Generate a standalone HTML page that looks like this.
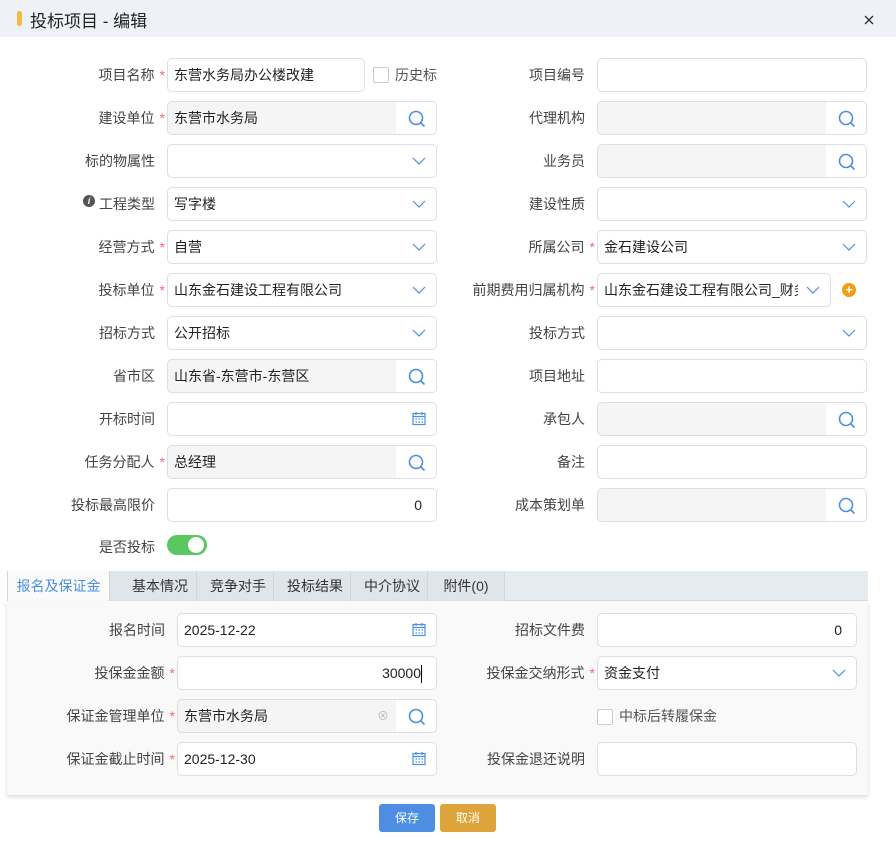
<!DOCTYPE html>
<html><head><meta charset="utf-8"><style>
*{box-sizing:border-box;margin:0;padding:0}
body{width:896px;height:851px;background:#fff;font-family:"Liberation Sans","Noto Sans CJK SC",sans-serif;font-size:14px;color:#333;position:relative;overflow:hidden}
.hd{position:absolute;left:0;top:0;width:896px;height:37px;background:#eef2f7}
.hd .bar{position:absolute;left:17px;top:11px;width:5px;height:15px;border-radius:3px;background:#f5b945}
.hd .t{position:absolute;left:30px;top:7px;font-size:17px;color:#222}
.l{position:absolute;text-align:right;line-height:34px;height:34px;color:#444}
.s{color:#f56c6c;margin-left:5px}
.i{position:absolute;height:34px;border:1px solid #dcdfe6;border-radius:5px;background:#fff;line-height:32px;padding-left:6px;color:#222;overflow:hidden;white-space:nowrap}
.g{background:#f5f5f5}
.sb{position:absolute;right:0;top:0;width:40px;height:32px;background:#fff}
.ic{position:absolute;right:10px;top:8px}
.tabs{position:absolute;left:7px;top:571px;width:861px;height:30px;background:#e6ebf0;border-bottom:1px solid #d8dde3}
.tab{position:absolute;top:0;height:30px;line-height:30px;text-align:center;border-right:1px solid #d0d6dd;color:#333;background:#dfe5eb;padding-left:6px}
.panel{position:absolute;left:7px;top:601px;width:861px;height:194px;background:#f9f9f9;box-shadow:0 2px 4px rgba(0,0,0,.15)}
.btn{position:absolute;top:804px;width:56px;height:28px;border-radius:3px;color:#fff;font-size:12px;line-height:28px;text-align:center}
.cb{position:absolute;width:16px;height:16px;border:1px solid #ccc;border-radius:2px;background:#fff}
</style></head><body>
<div class="hd"><div class="bar"></div><div class="t">投标项目 - 编辑</div>
<svg style="position:absolute;left:864px;top:15px" width="10" height="10" viewBox="0 0 10 10"><path d="M1 1l8 8M9 1l-8 8" stroke="#333" stroke-width="1.4"/></svg></div>

<div class="l" style="left:40px;width:125px;top:58px">项目名称<span class="s">*</span></div>
<div class="i" style="left:167px;top:58px;width:198px">东营水务局办公楼改建</div>
<div class="cb" style="left:373px;top:67px"></div><div class="l" style="left:395px;top:58px;text-align:left;color:#555">历史标</div>
<div class="l" style="left:460px;width:125px;top:58px">项目编号</div>
<div class="i" style="left:597px;top:58px;width:270px"></div>

<div class="l" style="left:40px;width:125px;top:101px">建设单位<span class="s">*</span></div>
<div class="i g" style="left:167px;top:101px;width:270px">东营市水务局<div class="sb"><svg class="ic" width="18" height="18" viewBox="0 0 18 18"><circle cx="8" cy="8" r="6.5" fill="none" stroke="#4a90e2" stroke-width="1.6"/><path d="M13 13l3.5 3.5" stroke="#4a90e2" stroke-width="1.6"/></svg></div></div>
<div class="l" style="left:460px;width:125px;top:101px">代理机构</div>
<div class="i g" style="left:597px;top:101px;width:270px"><div class="sb"><svg class="ic" width="18" height="18" viewBox="0 0 18 18"><circle cx="8" cy="8" r="6.5" fill="none" stroke="#4a90e2" stroke-width="1.6"/><path d="M13 13l3.5 3.5" stroke="#4a90e2" stroke-width="1.6"/></svg></div></div>

<div class="l" style="left:40px;width:115px;top:144px">标的物属性</div>
<div class="i" style="left:167px;top:144px;width:270px"><svg class="ic" style="top:11px" width="14" height="10" viewBox="0 0 14 10"><path d="M1 2l6 6 6-6" fill="none" stroke="#4a90e2" stroke-width="1.2"/></svg></div>
<div class="l" style="left:460px;width:125px;top:144px">业务员</div>
<div class="i g" style="left:597px;top:144px;width:270px"><div class="sb"><svg class="ic" width="18" height="18" viewBox="0 0 18 18"><circle cx="8" cy="8" r="6.5" fill="none" stroke="#4a90e2" stroke-width="1.6"/><path d="M13 13l3.5 3.5" stroke="#4a90e2" stroke-width="1.6"/></svg></div></div>

<div style="position:absolute;left:83px;top:195px;width:12px;height:12px;border-radius:50%;background:#555;color:#fff;font-size:9px;font-weight:bold;font-style:italic;text-align:center;line-height:12px">i</div>
<div class="l" style="left:40px;width:115px;top:187px">工程类型</div>
<div class="i" style="left:167px;top:187px;width:270px">写字楼<svg class="ic" style="top:11px" width="14" height="10" viewBox="0 0 14 10"><path d="M1 2l6 6 6-6" fill="none" stroke="#4a90e2" stroke-width="1.2"/></svg></div>
<div class="l" style="left:460px;width:125px;top:187px">建设性质</div>
<div class="i" style="left:597px;top:187px;width:270px"><svg class="ic" style="top:11px" width="14" height="10" viewBox="0 0 14 10"><path d="M1 2l6 6 6-6" fill="none" stroke="#4a90e2" stroke-width="1.2"/></svg></div>

<div class="l" style="left:40px;width:125px;top:230px">经营方式<span class="s">*</span></div>
<div class="i" style="left:167px;top:230px;width:270px">自营<svg class="ic" style="top:11px" width="14" height="10" viewBox="0 0 14 10"><path d="M1 2l6 6 6-6" fill="none" stroke="#4a90e2" stroke-width="1.2"/></svg></div>
<div class="l" style="left:460px;width:135px;top:230px">所属公司<span class="s">*</span></div>
<div class="i" style="left:597px;top:230px;width:270px">金石建设公司<svg class="ic" style="top:11px" width="14" height="10" viewBox="0 0 14 10"><path d="M1 2l6 6 6-6" fill="none" stroke="#4a90e2" stroke-width="1.2"/></svg></div>

<div class="l" style="left:40px;width:125px;top:273px">投标单位<span class="s">*</span></div>
<div class="i" style="left:167px;top:273px;width:270px">山东金石建设工程有限公司<svg class="ic" style="top:11px" width="14" height="10" viewBox="0 0 14 10"><path d="M1 2l6 6 6-6" fill="none" stroke="#4a90e2" stroke-width="1.2"/></svg></div>
<div class="l" style="left:440px;width:155px;top:273px">前期费用归属机构<span class="s">*</span></div>
<div class="i" style="left:597px;top:273px;width:234px;padding-right:30px">山东金石建设工程有限公司_财务<div style="position:absolute;right:0;top:0;width:32px;height:32px;background:#fff"></div><svg class="ic" style="top:11px" width="14" height="10" viewBox="0 0 14 10"><path d="M1 2l6 6 6-6" fill="none" stroke="#4a90e2" stroke-width="1.2"/></svg></div>
<div style="position:absolute;left:842px;top:283px;width:14px;height:14px;border-radius:50%;background:#f39c12;color:#fff;font-size:13px;font-weight:bold;line-height:14px;text-align:center">+</div>

<div class="l" style="left:40px;width:115px;top:316px">招标方式</div>
<div class="i" style="left:167px;top:316px;width:270px">公开招标<svg class="ic" style="top:11px" width="14" height="10" viewBox="0 0 14 10"><path d="M1 2l6 6 6-6" fill="none" stroke="#4a90e2" stroke-width="1.2"/></svg></div>
<div class="l" style="left:460px;width:125px;top:316px">投标方式</div>
<div class="i" style="left:597px;top:316px;width:270px"><svg class="ic" style="top:11px" width="14" height="10" viewBox="0 0 14 10"><path d="M1 2l6 6 6-6" fill="none" stroke="#4a90e2" stroke-width="1.2"/></svg></div>

<div class="l" style="left:40px;width:115px;top:359px">省市区</div>
<div class="i g" style="left:167px;top:359px;width:270px">山东省-东营市-东营区<div class="sb"><svg class="ic" width="18" height="18" viewBox="0 0 18 18"><circle cx="8" cy="8" r="6.5" fill="none" stroke="#4a90e2" stroke-width="1.6"/><path d="M13 13l3.5 3.5" stroke="#4a90e2" stroke-width="1.6"/></svg></div></div>
<div class="l" style="left:460px;width:125px;top:359px">项目地址</div>
<div class="i" style="left:597px;top:359px;width:270px"></div>

<div class="l" style="left:40px;width:115px;top:402px">开标时间</div>
<div class="i" style="left:167px;top:402px;width:270px"><svg class="ic" width="14" height="15" viewBox="0 0 14 15"><rect x="1" y="2.5" width="12" height="11" fill="none" stroke="#4a90e2" stroke-width="1.2"/><path d="M1 5.5h12M4 1v3M10 1v3M3.5 8h1.5M6.5 8h1.5M9.5 8h1.5M3.5 11h1.5M6.5 11h1.5M9.5 11h1.5" stroke="#4a90e2" stroke-width="1.2"/></svg></div>
<div class="l" style="left:460px;width:125px;top:402px">承包人</div>
<div class="i g" style="left:597px;top:402px;width:270px"><div class="sb"><svg class="ic" width="18" height="18" viewBox="0 0 18 18"><circle cx="8" cy="8" r="6.5" fill="none" stroke="#4a90e2" stroke-width="1.6"/><path d="M13 13l3.5 3.5" stroke="#4a90e2" stroke-width="1.6"/></svg></div></div>

<div class="l" style="left:40px;width:125px;top:445px">任务分配人<span class="s">*</span></div>
<div class="i g" style="left:167px;top:445px;width:270px">总经理<div class="sb"><svg class="ic" width="18" height="18" viewBox="0 0 18 18"><circle cx="8" cy="8" r="6.5" fill="none" stroke="#4a90e2" stroke-width="1.6"/><path d="M13 13l3.5 3.5" stroke="#4a90e2" stroke-width="1.6"/></svg></div></div>
<div class="l" style="left:460px;width:125px;top:445px">备注</div>
<div class="i" style="left:597px;top:445px;width:270px"></div>

<div class="l" style="left:40px;width:115px;top:488px">投标最高限价</div>
<div class="i" style="left:167px;top:488px;width:270px;text-align:right;padding-right:14px">0</div>
<div class="l" style="left:460px;width:125px;top:488px">成本策划单</div>
<div class="i g" style="left:597px;top:488px;width:270px"><div class="sb"><svg class="ic" width="18" height="18" viewBox="0 0 18 18"><circle cx="8" cy="8" r="6.5" fill="none" stroke="#4a90e2" stroke-width="1.6"/><path d="M13 13l3.5 3.5" stroke="#4a90e2" stroke-width="1.6"/></svg></div></div>

<div class="l" style="left:40px;width:115px;top:530px">是否投标</div>
<div style="position:absolute;left:167px;top:535px;width:40px;height:20px;border-radius:10px;background:#5ac85e"><div style="position:absolute;left:21px;top:2px;width:16px;height:16px;border-radius:50%;background:#fff"></div></div>

<div class="tabs">
<div class="tab" style="left:0;width:103px;background:#fafafa;color:#4a90e2;height:31px;border-left:1px solid #d0d6dd;padding-left:0">报名及保证金</div>
<div class="tab" style="left:103px;width:87px;padding-left:14px">基本情况</div>
<div class="tab" style="left:190px;width:77px">竞争对手</div>
<div class="tab" style="left:267px;width:77px">投标结果</div>
<div class="tab" style="left:344px;width:77px">中介协议</div>
<div class="tab" style="left:421px;width:77px;padding-left:0">附件(0)</div>
</div>
<div class="panel"></div>

<div class="l" style="left:50px;width:115px;top:613px">报名时间</div>
<div class="i" style="left:177px;top:613px;width:260px">2025-12-22<svg class="ic" width="14" height="15" viewBox="0 0 14 15"><rect x="1" y="2.5" width="12" height="11" fill="none" stroke="#4a90e2" stroke-width="1.2"/><path d="M1 5.5h12M4 1v3M10 1v3M3.5 8h1.5M6.5 8h1.5M9.5 8h1.5M3.5 11h1.5M6.5 11h1.5M9.5 11h1.5" stroke="#4a90e2" stroke-width="1.2"/></svg></div>
<div class="l" style="left:460px;width:125px;top:613px">招标文件费</div>
<div class="i" style="left:597px;top:613px;width:260px;text-align:right;padding-right:14px">0</div>

<div class="l" style="left:50px;width:125px;top:656px">投保金金额<span class="s">*</span></div>
<div class="i" style="left:177px;top:656px;width:260px;text-align:right;padding-right:14px">30000<span style="display:inline-block;width:1px;height:18px;background:#000;vertical-align:middle"></span></div>
<div class="l" style="left:460px;width:135px;top:656px">投保金交纳形式<span class="s">*</span></div>
<div class="i" style="left:597px;top:656px;width:260px">资金支付<svg class="ic" style="top:11px" width="14" height="10" viewBox="0 0 14 10"><path d="M1 2l6 6 6-6" fill="none" stroke="#4a90e2" stroke-width="1.2"/></svg></div>

<div class="l" style="left:40px;width:135px;top:699px">保证金管理单位<span class="s">*</span></div>
<div class="i g" style="left:177px;top:699px;width:260px">东营市水务局<span style="position:absolute;left:199px;top:0;color:#bbb;font-size:12px">⊗</span><div class="sb"><svg class="ic" width="18" height="18" viewBox="0 0 18 18"><circle cx="8" cy="8" r="6.5" fill="none" stroke="#4a90e2" stroke-width="1.6"/><path d="M13 13l3.5 3.5" stroke="#4a90e2" stroke-width="1.6"/></svg></div></div>
<div class="cb" style="left:597px;top:709px"></div><div class="l" style="left:619px;top:699px;text-align:left;color:#555">中标后转履保金</div>

<div class="l" style="left:40px;width:135px;top:742px">保证金截止时间<span class="s">*</span></div>
<div class="i" style="left:177px;top:742px;width:260px">2025-12-30<svg class="ic" width="14" height="15" viewBox="0 0 14 15"><rect x="1" y="2.5" width="12" height="11" fill="none" stroke="#4a90e2" stroke-width="1.2"/><path d="M1 5.5h12M4 1v3M10 1v3M3.5 8h1.5M6.5 8h1.5M9.5 8h1.5M3.5 11h1.5M6.5 11h1.5M9.5 11h1.5" stroke="#4a90e2" stroke-width="1.2"/></svg></div>
<div class="l" style="left:460px;width:125px;top:742px">投保金退还说明</div>
<div class="i" style="left:597px;top:742px;width:260px"></div>

<div class="btn" style="left:379px;background:#4d8ee3">保存</div>
<div class="btn" style="left:440px;background:#dea43a">取消</div>
</body></html>
